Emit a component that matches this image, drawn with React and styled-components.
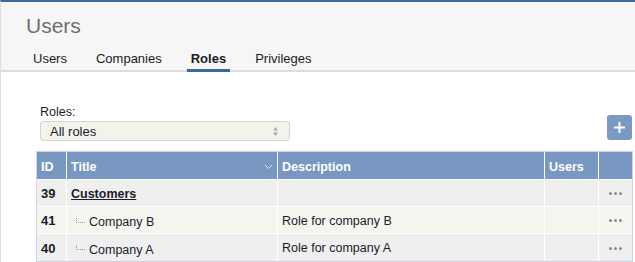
import React from "react";
import styled, { createGlobalStyle } from "styled-components";

const GlobalStyle = createGlobalStyle`
  html, body {
    margin: 0;
    padding: 0;
    background: #ffffff;
  }
  body {
    font-family: "Liberation Sans", Arial, sans-serif;
    color: #1b1b2b;
  }
  * {
    box-sizing: border-box;
  }
`;

const Page = styled.div`
  min-height: 100vh;
  border-top: 2px solid #3f6898;
  border-left: 1px solid #dcdcdc;
`;

const Header = styled.div`
  background-color: #f6f6f6;
  border-bottom: 2px solid #dddddd;
  height: 70px;
  display: flex;
  flex-direction: column;
  justify-content: space-between;
`;

const PageTitle = styled.h1`
  margin: 0;
  padding: 11px 0 0 25px;
  font-size: 21px;
  font-weight: normal;
  color: #6e6d73;
  line-height: 26px;
`;

const Tabs = styled.nav`
  display: flex;
  gap: 21px;
  padding-left: 28px;
`;

const Tab = styled.div`
  padding: 0 4px 2px;
  font-size: 13px;
  line-height: 16px;
  color: #1b1b1b;
  font-weight: ${(p) => (p.$active ? "bold" : "normal")};
  border-bottom: 3px solid ${(p) => (p.$active ? "#3f6898" : "transparent")};
  margin-bottom: -2px;
`;

const Content = styled.div`
  padding: 33px 3px 0 35px;
`;

const Toolbar = styled.div`
  display: flex;
  justify-content: space-between;
  align-items: flex-end;
`;

const Filter = styled.div`
  display: flex;
  flex-direction: column;
  gap: 1px;
  padding-left: 4px;
`;

const Label = styled.label`
  font-size: 12.5px;
  line-height: 15px;
`;

const Select = styled.div`
  width: 250px;
  height: 20px;
  background-color: #f3f2eb;
  border: 1px solid #d4d4d4;
  border-radius: 3px;
  display: flex;
  align-items: center;
  justify-content: space-between;
  padding: 0 10px 0 9px;
  font-size: 13px;
`;

const AddButton = styled.button`
  width: 25px;
  height: 25px;
  margin-bottom: 1px;
  border: none;
  border-radius: 3px;
  background-color: #7a9ac3;
  color: #ffffff;
  display: flex;
  align-items: center;
  justify-content: center;
  padding: 0;
`;

const Table = styled.table`
  margin-top: 10px;
  width: 597px;
  table-layout: fixed;
  border-collapse: separate;
  border-spacing: 0;
  border: 1px solid #c8d5e6;
  font-size: 12.5px;
`;

const HeadCell = styled.th`
  background-color: #7898c2;
  color: #ffffff;
  text-align: left;
  font-weight: bold;
  height: 28px;
  padding: 2px 4px 0;
  border-right: 1px solid #ffffff;
  border-bottom: 1px solid #ffffff;
  &:last-child {
    border-right: none;
  }
`;

const HeadInner = styled.div`
  display: flex;
  align-items: center;
  justify-content: space-between;
`;

const Row = styled.tr`
  background-color: ${(p) => (p.$alt ? "#f5f5ef" : "#efefef")};
  &:last-child td {
    border-bottom: none;
  }
`;

const Cell = styled.td`
  height: 27px;
  padding: 1px 4px 0;
  border-right: 1px solid #ffffff;
  border-bottom: 1px solid #ffffff;
  white-space: nowrap;
  &:last-child {
    border-right: none;
  }
`;

const IdText = styled.span`
  font-weight: bold;
  font-size: 13px;
`;

const GroupLink = styled.a`
  font-weight: bold;
  color: #1b1b2b;
  text-decoration: underline;
`;

const TreeItem = styled.span`
  display: inline-flex;
  align-items: center;
  padding-left: 5px;
`;

const Branch = styled.span`
  display: inline-block;
  width: 9px;
  height: 5px;
  margin: -4px 4px 0 0;
  border-left: 1px dotted #9a9a9a;
  border-bottom: 1px dotted #9a9a9a;
`;

const Dots = styled.span`
  display: flex;
  justify-content: center;
  gap: 2px;
`;

const Dot = styled.span`
  width: 3px;
  height: 3px;
  border-radius: 50%;
  background-color: #8a8a8a;
`;

const roles = [
  { id: 39, title: "Customers", description: "", group: true },
  { id: 41, title: "Company B", description: "Role for company B" },
  { id: 40, title: "Company A", description: "Role for company A" },
];

function More() {
  return (
    <Dots>
      <Dot />
      <Dot />
      <Dot />
    </Dots>
  );
}

export default function App() {
  return (
    <Page>
      <GlobalStyle />
      <Header>
        <PageTitle>Users</PageTitle>
        <Tabs>
          <Tab>Users</Tab>
          <Tab>Companies</Tab>
          <Tab $active>Roles</Tab>
          <Tab>Privileges</Tab>
        </Tabs>
      </Header>

      <Content>
        <Toolbar>
          <Filter>
            <Label>Roles:</Label>
            <Select>
              <span>All roles</span>
              <svg width="7" height="11" viewBox="0 0 7 11">
                <path d="M3.5 1 L6 4.5 H1 Z" fill="#a8a8a8" />
                <path d="M3.5 10 L6 6.5 H1 Z" fill="#a8a8a8" />
              </svg>
            </Select>
          </Filter>
          <AddButton>
            <svg width="13" height="13" viewBox="0 0 13 13">
              <path d="M6.5 1 V12 M1 6.5 H12" stroke="#fff" strokeWidth="2" />
            </svg>
          </AddButton>
        </Toolbar>

        <Table>
          <colgroup>
            <col style={{ width: 30 }} />
            <col style={{ width: 211 }} />
            <col style={{ width: 267 }} />
            <col style={{ width: 54 }} />
            <col style={{ width: 33 }} />
          </colgroup>
          <thead>
            <tr>
              <HeadCell>ID</HeadCell>
              <HeadCell>
                <HeadInner>
                  <span>Title</span>
                  <svg width="9" height="6" viewBox="0 0 9 6">
                    <path d="M1 1 L4.5 4.5 L8 1" stroke="#dfe7f1" fill="none" />
                  </svg>
                </HeadInner>
              </HeadCell>
              <HeadCell>Description</HeadCell>
              <HeadCell>Users</HeadCell>
              <HeadCell />
            </tr>
          </thead>
          <tbody>
            {roles.map((role, i) => (
              <Row key={role.id} $alt={i % 2 === 1}>
                <Cell>
                  <IdText>{role.id}</IdText>
                </Cell>
                <Cell>
                  {role.group ? (
                    <GroupLink>{role.title}</GroupLink>
                  ) : (
                    <TreeItem>
                      <Branch />
                      {role.title}
                    </TreeItem>
                  )}
                </Cell>
                <Cell>{role.description}</Cell>
                <Cell />
                <Cell>
                  <More />
                </Cell>
              </Row>
            ))}
          </tbody>
        </Table>
      </Content>
    </Page>
  );
}
